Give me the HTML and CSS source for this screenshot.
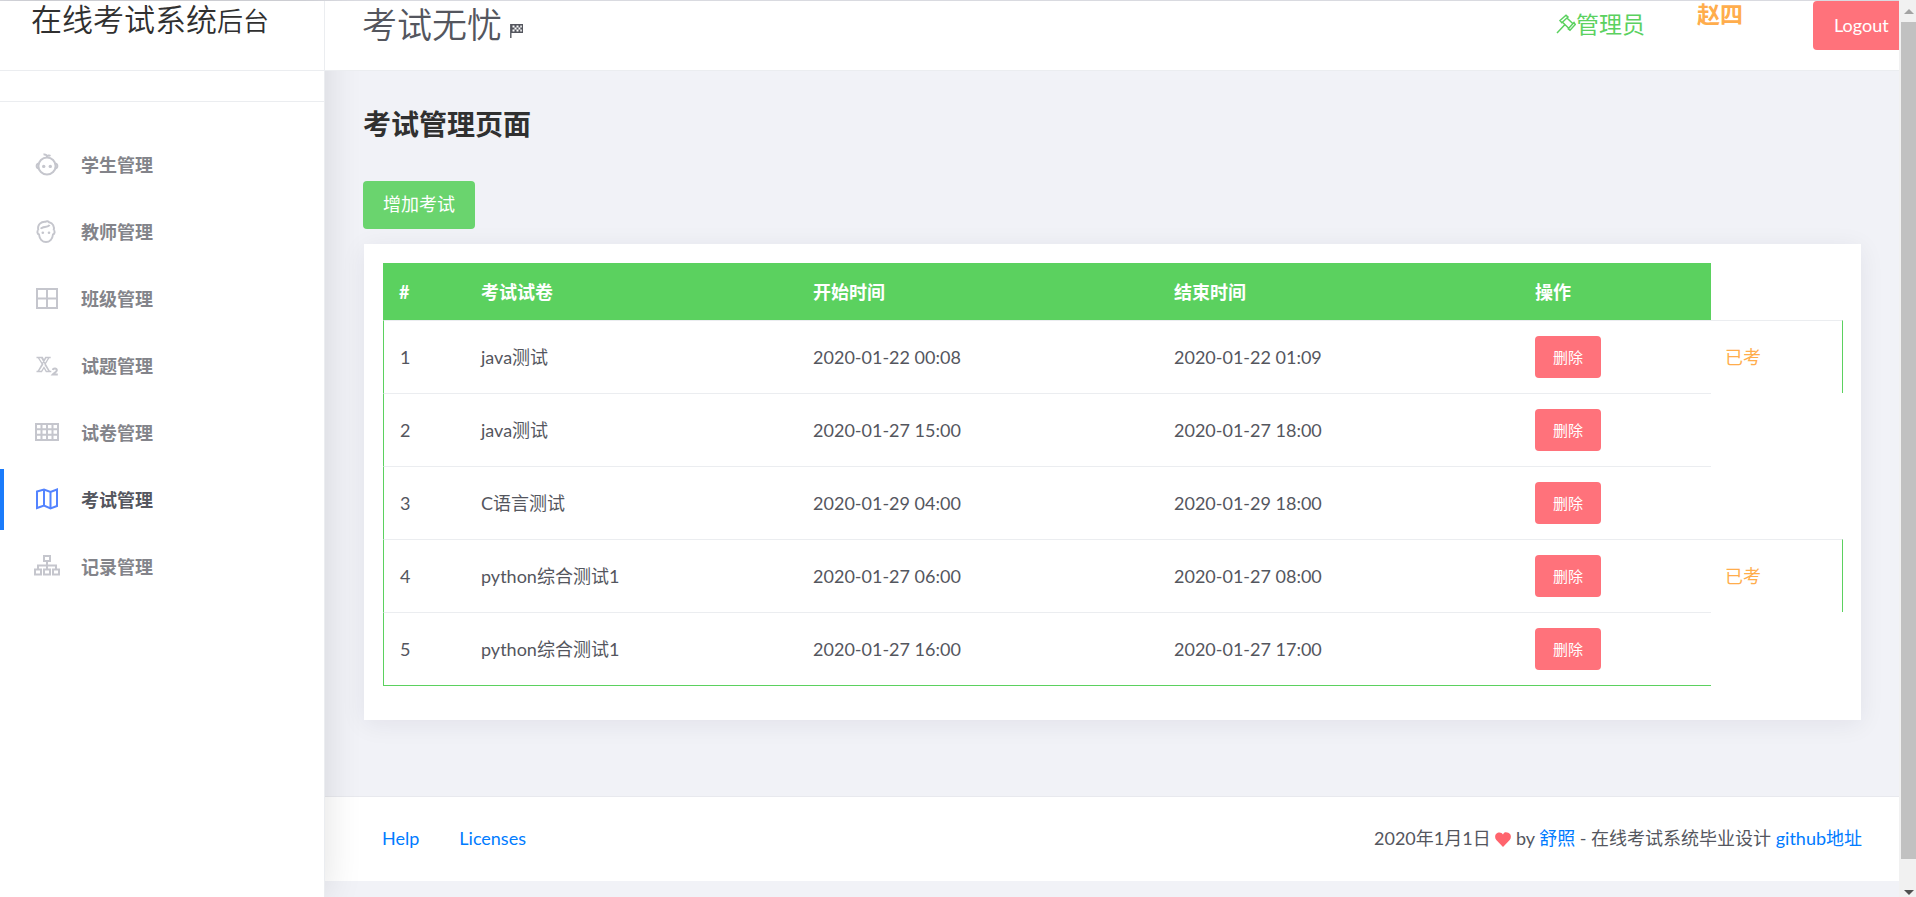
FILE: index.html
```html
<!DOCTYPE html>
<html lang="zh-CN">
<head>
<meta charset="utf-8">
<title>在线考试系统后台</title>
<link rel="stylesheet" href="styles.css">
</head>
<body>
<div class="app">
  <aside class="sidebar">
    <div class="brand">在线考试系统<span class="brand-sub">后台</span></div>
    <div class="sidebar-strip"></div>
    <nav class="menu">
      <a class="menu-item" href="#">
        <svg class="menu-icon" viewBox="0 0 26 26"><circle cx="13" cy="14" r="8.6"/><path d="M4.600 11.500C2 12 2 16 4.600 16.500M21.400 11.500c2.600.5 2.600 4.500 0 5M13 5.500C13.500 3.500 11.500 2 9.500 2.500M13 5c.5-1.500 2-2 3.500-1.200"/><circle class="dot" cx="9.700" cy="14.400" r="1.700"/><circle class="dot" cx="16.300" cy="14.400" r="1.700"/></svg>
        学生管理
      </a>
      <a class="menu-item" href="#">
        <svg class="menu-icon" viewBox="0 0 26 26"><path d="M4.300 11.500C3 5 7.500 2.500 11.500 2.800c1-1 3-.8 3.600.5C19 4 20.500 7.500 19.700 11.500M4.300 11.500c-1.400.4-1.200 3.500.7 4 .5 4.500 3.500 7.500 7 7.500s6.500-3 7-7.500c1.900-.5 2.100-3.600.7-4M7 9.800c1-2.800 7-.8 8.500-4"/><circle class="dot" cx="8.800" cy="13.800" r="1.300"/><circle class="dot" cx="15" cy="13.800" r="1.300"/></svg>
        教师管理
      </a>
      <a class="menu-item" href="#">
        <svg class="menu-icon" viewBox="0 0 26 26"><path d="M3 3h20v19H3zM13 3v19M3 12.500h20"/></svg>
        班级管理
      </a>
      <a class="menu-item" href="#">
        <svg class="menu-icon" viewBox="0 0 26 26"><path class="thin" d="M2.500 4.500h5.800L10 7.500l1.700-3h5M2.500 18.500h5l2.500-4 2.300 4h5M4.200 4.500l4.400 7-4.600 7M7.500 4.500l8 14M15 4.500l-4.200 7M12 4.500l-8 14M11 11.500l4.500 7"/><path d="M18.800 17c.3-2 4.300-1.800 4 .3-.2 1.500-2.500 2.500-4 4.200h5"/></svg>
        试题管理
      </a>
      <a class="menu-item" href="#">
        <svg class="menu-icon" viewBox="0 0 26 26"><path d="M2 4h22v16H2zM7.500 4v16M13 4v16M18.500 4v16M2 9.300h22M2 14.700h22"/></svg>
        试卷管理
      </a>
      <a class="menu-item active" href="#">
        <svg class="menu-icon" viewBox="0 0 26 26"><path d="M3 4.500l7-2L16.500 5l6.500-2.500v16.500L16.500 21.500 10 18.500l-7 2.500zM10 2.500v16M16.500 5v16.500"/></svg>
        考试管理
      </a>
      <a class="menu-item" href="#">
        <svg class="menu-icon" viewBox="0 0 26 26"><path d="M10 2h6v5h-6zM1 15.500h6v5H1zM10 15.500h6v5h-6zM19 15.500h6v5h-6zM13 7v8.500M4 15.500v-4h18v4"/></svg>
        记录管理
      </a>
    </nav>
  </aside>
  <div class="page">
    <header class="topbar">
      <div class="topbar-title">考试无忧<svg class="flag" viewBox="0 0 14 14"><path d="M.8 0v14" stroke="#54565e" stroke-width="1.400"/><path d="M1 0h12v9H1z" fill="#54565e"/><path d="M2.500 1.500h2v2h-2zM6.500 1.500h2v2h-2zM10.300 1.500h1.500v2h-1.500zM4.500 3.500h2v2h-2zM8.500 3.500h1.800v2H8.500zM2.500 5.500h2v2h-2zM6.500 5.500h2v2h-2zM10.300 5.500h1.500v2h-1.500z" fill="#fff"/></svg>
      </div>
      <div class="role"><svg class="gavel" viewBox="0 0 20 20"><path d="M1 19L9 10.500M4 6.500L10 1.300l2 1.800-6.200 5.600zM12.300 14.800l5.700-6.300 1.300 2-5.300 5.700zM6.500 8.200l6.500 6.300M11.200 4.200l5.800 5.600"/></svg>管理员</div>
      <div class="user">赵四</div>
      <button class="btn btn-logout" type="button">Logout</button>
    </header>
    <main class="content">
      <h1 class="heading">考试管理页面</h1>
      <button class="btn btn-add" type="button">增加考试</button>
      <section class="card">
        <table class="exams">
          <colgroup><col class="c-num"><col class="c-paper"><col class="c-time"><col class="c-time"><col class="c-action"><col class="c-status"></colgroup>
          <thead><tr><th>#</th><th>考试试卷</th><th>开始时间</th><th>结束时间</th><th>操作</th></tr></thead>
          <tbody>
            <tr><td>1</td><td>java测试</td><td>2020-01-22 00:08</td><td>2020-01-22 01:09</td><td><button class="btn btn-delete" type="button">删除</button></td><td class="status">已考</td></tr>
            <tr><td>2</td><td>java测试</td><td>2020-01-27 15:00</td><td>2020-01-27 18:00</td><td><button class="btn btn-delete" type="button">删除</button></td></tr>
            <tr><td>3</td><td>C语言测试</td><td>2020-01-29 04:00</td><td>2020-01-29 18:00</td><td><button class="btn btn-delete" type="button">删除</button></td></tr>
            <tr><td>4</td><td>python综合测试1</td><td>2020-01-27 06:00</td><td>2020-01-27 08:00</td><td><button class="btn btn-delete" type="button">删除</button></td><td class="status">已考</td></tr>
            <tr><td>5</td><td>python综合测试1</td><td>2020-01-27 16:00</td><td>2020-01-27 17:00</td><td><button class="btn btn-delete" type="button">删除</button></td></tr>
          </tbody>
        </table>
      </section>
    </main>
    <footer class="footer">
      <nav class="footer-links"><a href="#">Help</a><a href="#">Licenses</a></nav>
      <p class="credit">2020年1月1日 <svg class="heart" viewBox="0 0 16 15"><path d="M8 15L1.300 8C-.8 5.500 0 1.800 2.700.8 5-.1 7 .8 8 2.600 9-.1 11-.1 13.300.8 16 1.800 16.800 5.500 14.700 8z"/></svg> by <a href="#">舒照</a> - 在线考试系统毕业设计 <a href="#">github地址</a></p>
    </footer>
  </div>
</div>
<div class="scrollbar"><span class="arrow up"></span><span class="thumb"></span><span class="arrow down"></span></div>
</body>
</html>
```

FILE: styles.css
```css
* { box-sizing: border-box; }

body {
  margin: 0;
  height: 100vh;
  display: flex;
  overflow: hidden;
  background: #f1f2f7;
  color: #54565e;
  font-family: Lato, "Noto Sans CJK SC", sans-serif;
  font-size: 18px;
  font-weight: 400;
  line-height: 24px;
}

a { color: #007bff; text-decoration: none; }

.app {
  flex: 1;
  min-width: 0;
  display: flex;
  border-top: 1px solid #d9dae0;
}

/* Sidebar */
.sidebar {
  position: relative;
  z-index: 1;
  flex: 0 0 325px;
  background: #fff;
  border-right: 1px solid #ebedf0;
  box-shadow: 0 0 36px rgba(0, 0, 0, 0.12);
}

.brand {
  height: 70px;
  padding-left: 31px;
  border-bottom: 1px solid #ebedf0;
  color: #303030;
  font-size: 31px;
  font-weight: 350;
  line-height: 36px;
}

.brand-sub { font-size: 26px; }

.sidebar-strip { height: 31px; border-bottom: 1px solid #ebedf0; }

.menu {
  display: flex;
  flex-direction: column;
  gap: 6px;
  padding-top: 32px;
}

.menu-item {
  display: flex;
  align-items: center;
  gap: 21px;
  height: 61px;
  padding-left: 30px;
  border-left: 4px solid transparent;
  color: #83848a;
  font-weight: 700;
}

.menu-icon {
  width: 26px;
  height: 26px;
  fill: none;
  stroke: #c5c6cd;
  stroke-width: 2;
}

.menu-icon .dot { fill: #c5c6cd; stroke: none; }
.menu-icon .thin { stroke-width: 1.4; }

.menu-item.active { border-left-color: #1a7bfb; color: #54565e; }
.active .menu-icon { stroke: #5383ff; }

/* Page column */
.page { flex: 1; min-width: 0; }

.topbar {
  position: relative;
  z-index: 2;
  display: flex;
  align-items: flex-start;
  height: 70px;
  padding-left: 37px;
  overflow: hidden;
  background: #fff;
  border-bottom: 1px solid #ebedf0;
}

.topbar-title {
  margin-right: auto;
  font-size: 35px;
  font-weight: 350;
  line-height: 46px;
}

.flag { width: 14px; height: 14px; margin-left: 8px; }

.role {
  display: flex;
  align-items: center;
  margin-right: 52px;
  color: #5bd15f;
  font-size: 23px;
  line-height: 46px;
}

.gavel {
  width: 20px;
  height: 20px;
  fill: none;
  stroke: #5bd15f;
  stroke-width: 1.5;
}

.user {
  margin-right: 70px;
  color: #ffad4c;
  font-size: 23px;
  font-weight: 700;
  line-height: 26px;
}

.btn {
  border: 0;
  border-radius: 4px;
  background: #ff727b;
  color: #fff;
  font: inherit;
}

.btn-logout {
  width: 86px;
  height: 49px;
  padding: 0 0 2px 21px;
  border-radius: 4px 0 0 4px;
  text-align: left;
}

.content { padding: 36px 38px 76px; }

.heading {
  margin: 0;
  color: #303030;
  font-size: 28px;
  font-weight: 700;
  line-height: 34px;
}

.btn-add {
  display: block;
  height: 48px;
  margin: 40px 0 15px;
  padding: 0 20px 2px;
  background: #6ad46e;
}

.card {
  margin-left: 1px;
  padding: 19px 18px 34px 19px;
  background: #fff;
  box-shadow: 0 4px 24px rgba(30, 20, 50, 0.07);
}

.exams {
  width: 100%;
  border-spacing: 0;
  table-layout: fixed;
}

.c-num { width: 82px; }
.c-paper { width: 23%; }
.c-time { width: 25%; }
.c-action { width: 192px; }
.c-status { width: 132px; }

.exams th {
  height: 57px;
  padding: 0 16px;
  background: #5bd15f;
  color: #fff;
  font-weight: 700;
  text-align: left;
}

.exams td {
  height: 73px;
  padding: 0 16px;
  border-top: 1px solid #ebedf0;
}

.exams td:first-child { border-left: 1px solid #5bd15f; }
.exams tr:last-child td { height: 74px; border-bottom: 1px solid #5bd15f; }

.exams td.status {
  padding-left: 14px;
  border-right: 1px solid #5bd15f;
  color: #ffad4c;
}

.btn-delete {
  display: block;
  min-width: 66px;
  height: 42px;
  padding: 0 16px 1px;
  font-size: 15px;
}

.footer {
  display: flex;
  align-items: center;
  justify-content: space-between;
  height: 85px;
  padding: 0 37px 2px 57px;
  background: #fff;
  border-top: 1px solid #e8e9ee;
}

.footer-links { display: flex; gap: 40px; }
.credit { margin: 0; }

.heart { width: 16px; height: 15px; fill: #ff646d; vertical-align: -2px; }

/* Scrollbar */
.scrollbar {
  flex: 0 0 17px;
  display: flex;
  flex-direction: column;
  align-items: center;
  padding: 9px 0 2px 2px;
  background: #f1f1f1;
}

.arrow { border: 5px solid transparent; }
.up { border-top: 0; border-bottom-color: #a3a3a3; }
.down { border-bottom: 0; border-top-color: #505050; }

.thumb {
  flex: 1;
  align-self: stretch;
  margin: 8px 0 31px;
  background: #c1c1c1;
}
```
